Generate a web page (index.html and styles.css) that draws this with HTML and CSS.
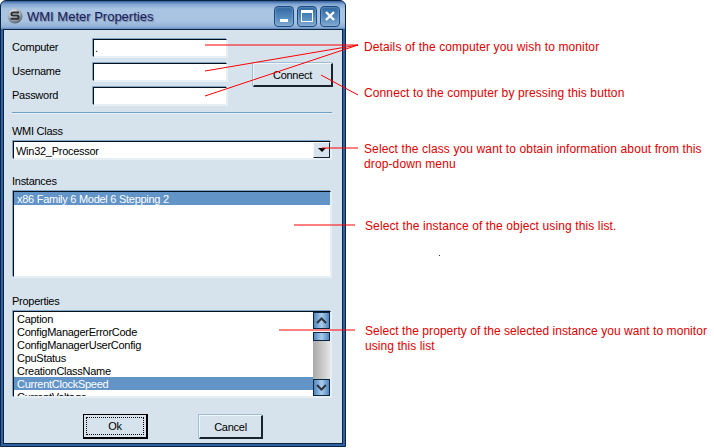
FILE: index.html
```html
<!DOCTYPE html>
<html lang="en">
<head>
  <meta charset="UTF-8" />
  <title>WMI Meter Properties</title>
  <link rel="stylesheet" href="styles.css">
</head>
<body>
  <div class="window">
    <div class="titlebar">
      <svg class="app-icon" width="16" height="16" viewBox="0 0 16 16">
        <defs>
          <radialGradient id="ball" cx="40%" cy="30%" r="75%">
            <stop offset="0" stop-color="#f2f4f6"/>
            <stop offset="0.6" stop-color="#a2a8b0"/>
            <stop offset="1" stop-color="#4b5460"/>
          </radialGradient>
        </defs>
        <circle cx="8" cy="8" r="7.5" fill="url(#ball)"/>
        <path d="M12 4.6H6.2C3.8 4.6 3.8 7.6 6.2 7.6H9.8C12.2 7.6 12.2 10.8 9.8 10.8H3.5" fill="none" stroke="#2a3038" stroke-width="2"/>
      </svg>
      <span class="title">WMI Meter Properties</span>
      <div class="title-buttons">
        <div class="title-btn"><span class="glyph-min"></span></div>
        <div class="title-btn"><span class="glyph-max"></span></div>
        <div class="title-btn">
          <svg width="12" height="12" viewBox="0 0 12 12"><path d="M2 2L10 10M10 2L2 10" stroke="#fff" stroke-width="2.4"/></svg>
        </div>
      </div>
    </div>

    <div class="client">
      <div class="login-form">
        <label class="lbl">Computer</label>
        <div class="field">.</div>
        <label class="lbl row2">Username</label>
        <div class="field row2"></div>
        <label class="lbl row3">Password</label>
        <div class="field row3"></div>
        <div class="btn connect-btn">Connect</div>
      </div>
      <div class="separator"></div>

      <div class="group-label class-label">WMI Class</div>
      <div class="field combo">
        <span class="combo-text">Win32_Processor</span>
        <div class="combo-btn"><span class="arrow-down"></span></div>
      </div>

      <div class="group-label instances-label">Instances</div>
      <div class="field listbox instances">
        <div class="list-item selected">x86 Family 6 Model 6 Stepping 2</div>
      </div>

      <div class="group-label properties-label">Properties</div>
      <div class="field listbox properties">
        <div class="list-rows">
          <div class="list-item">Caption</div>
          <div class="list-item">ConfigManagerErrorCode</div>
          <div class="list-item">ConfigManagerUserConfig</div>
          <div class="list-item">CpuStatus</div>
          <div class="list-item">CreationClassName</div>
          <div class="list-item selected">CurrentClockSpeed</div>
          <div class="list-item">CurrentVoltage</div>
        </div>
        <div class="scrollbar">
          <div class="scroll-btn">
            <svg width="11" height="7" viewBox="0 0 11 7"><path d="M1 6L5.5 1.5L10 6" fill="none" stroke="#2c3440" stroke-width="2"/></svg>
          </div>
          <div class="scroll-thumb"></div>
          <div class="scroll-track"></div>
          <div class="scroll-btn">
            <svg width="11" height="7" viewBox="0 0 11 7"><path d="M1 1L5.5 5.5L10 1" fill="none" stroke="#2c3440" stroke-width="2"/></svg>
          </div>
        </div>
      </div>

      <div class="dialog-buttons">
        <div class="btn default-btn"><span class="focus-box">Ok</span></div>
        <div class="btn cancel-btn">Cancel</div>
      </div>
    </div>
  </div>

  <!-- callouts drawn over the dialog -->
  <svg class="callout-lines" width="714" height="448" viewBox="0 0 714 448">
    <path d="M205 45H358M205 71L358 45M205 96L358 45M321 75L358 95M322 148H358M294 225H355M279 330H355" fill="none" stroke="#f00" stroke-width="1"/>
    <rect x="439" y="255" width="1" height="1" fill="#333"/>
  </svg>
  <div class="note note-details">Details of the computer you wish to monitor</div>
  <div class="note note-connect">Connect to the computer by pressing this button</div>
  <div class="note note-class">Select the class you want to obtain information about from this<br>drop-down menu</div>
  <div class="note note-instance">Select the instance of the object using this list.</div>
  <div class="note note-property">Select the property of the selected instance you want to monitor<br>using this list</div>
</body>
</html>
```

FILE: styles.css
```css
* {
  margin: 0;
  padding: 0;
  box-sizing: border-box;
}

body {
  position: relative;
  width: 714px;
  height: 448px;
  overflow: hidden;
  background-color: #fff;
  font-family: "Liberation Sans", Arial, sans-serif;
  font-size: 11px;
  letter-spacing: -0.27px;
  color: #000;
}

.window {
  width: 346px;
  height: 447px;
  display: flex;
  flex-direction: column;
  background-color: #2f62a5;
  border: 1px solid #0d2440;
  border-top-left-radius: 6px;
  border-top-right-radius: 6px;
  padding: 0 2px 2px 2px;
}

.titlebar {
  height: 28px;
  flex: none;
  margin: 0 -2px;
  padding: 2px 5px 0 6px;
  display: flex;
  align-items: center;
  gap: 4px;
  background: linear-gradient(180deg, #2f5f9e 0, #7fa4d0 3px, #a9c4e2 8px, #a9c4e2 20px, #8fb0d6 26px, #5f8abd 100%);
  border-top-left-radius: 5px;
  border-top-right-radius: 5px;
}

.app-icon {
  flex: none;
}

.title {
  flex: 1;
  font-size: 13px;
  letter-spacing: 0;
  color: #15205c;
  text-shadow: 1px 1px 1px #6f7f9f;
}

.title-buttons {
  display: flex;
  gap: 3px;
}

.title-btn {
  width: 20px;
  height: 21px;
  display: flex;
  align-items: center;
  justify-content: center;
  border: 1px solid #1f4a80;
  border-radius: 4px;
  background: linear-gradient(180deg, #2f669f 0, #4f86bb 50%, #7fa8d0 100%);
  box-shadow: inset 0 0 2px #a9c8e6;
}

.glyph-min {
  width: 8px;
  height: 3px;
  margin-top: 9px;
  background-color: #fff;
}

.glyph-max {
  width: 12px;
  height: 12px;
  border: 1px solid #fff;
  border-top-width: 3px;
}

.client {
  flex: 1;
  display: flex;
  flex-direction: column;
  padding: 9px 11px 0 9px;
  background-color: #d6e3ed;
  border: 1px solid #0d2440;
}

.login-form {
  display: grid;
  margin-left: -1px;
  grid-template-columns: 81px 134px 26px 80px;
  grid-template-rows: 18px 18px 18px;
  row-gap: 6px;
}

.lbl {
  grid-column: 1;
  grid-row: 1;
  align-self: center;
  margin-top: -2px;
}

.field {
  background-color: #fff;
  border: 1px solid;
  border-color: #0a0f18 #e6eff5 #e6eff5 #0a0f18;
  box-shadow: -1px -1px 0 #7fa6c8, 1px 1px 0 #e6eff5;
  padding-left: 1px;
  line-height: 16px;
}

.login-form .field {
  grid-column: 2;
  grid-row: 1;
}

.login-form .row2 {
  grid-row: 2;
}

.login-form .row3 {
  grid-row: 3;
}

.btn {
  display: flex;
  align-items: center;
  justify-content: center;
  background-color: #d6e3ed;
  border-style: solid;
  border-width: 1px 2px 2px 1px;
  border-color: #f2f7fa #1a2430 #1a2430 #f2f7fa;
  box-shadow: -1px -1px 0 #9fbdd6;
}

.connect-btn {
  grid-column: 4;
  grid-row: 2 / 4;
  height: 24px;
}

.separator {
  height: 2px;
  flex: none;
  margin: 7px -1px 0 -1px;
  background: linear-gradient(180deg, #6f9fc4 50%, #e8f1f6 50%);
}

.group-label {
  flex: none;
  line-height: 13px;
  margin-left: -1px;
}

.class-label {
  margin-top: 11px;
}

.combo {
  height: 18px;
  flex: none;
  margin-top: 3px;
  display: flex;
  align-items: center;
  justify-content: space-between;
  padding: 0 0 0 2px;
}

.combo-text {
  padding-top: 1px;
}

.combo-btn {
  width: 17px;
  height: 16px;
  display: flex;
  align-items: center;
  justify-content: center;
  background-color: #d6e3ed;
  border: 1px solid;
  border-color: #f2f7fa #1a2430 #1a2430 #f2f7fa;
}

.arrow-down {
  width: 0;
  height: 0;
  border-style: solid;
  border-width: 4px 4px 0 4px;
  border-color: #000 transparent transparent transparent;
}

.instances-label {
  margin-top: 16px;
}

.listbox {
  padding: 0;
  line-height: 13px;
}

.instances {
  height: 86px;
  flex: none;
  margin-top: 3px;
}

.list-item {
  height: 13px;
  padding: 1px 0 0 3px;
  white-space: nowrap;
}

.list-item.selected {
  background-color: #6394c8;
  color: #fff;
}

.properties-label {
  margin-top: 18px;
}

.properties {
  height: 86px;
  flex: none;
  margin-top: 3px;
  display: flex;
  overflow: hidden;
}

.list-rows {
  flex: 1;
  height: 84px;
  overflow: hidden;
}

.scrollbar {
  width: 17px;
  height: 84px;
  display: flex;
  flex-direction: column;
}

.scroll-btn {
  height: 17px;
  flex: none;
  display: flex;
  align-items: center;
  justify-content: center;
  border: 1px solid #10253f;
  background: linear-gradient(90deg, #4f86c0, #a9cbe8 50%, #4f86c0);
}

.scroll-thumb {
  height: 9px;
  flex: none;
  margin-top: 3px;
  border: 1px solid #10253f;
  background: linear-gradient(90deg, #4f86c0, #a9cbe8 50%, #4f86c0);
}

.scroll-track {
  flex: 1;
  background: linear-gradient(90deg, #a9a9a9, #e4e4e4);
}

.dialog-buttons {
  display: flex;
  align-items: flex-start;
  margin-top: 17px;
  padding-left: 70px;
  gap: 51px;
}

.default-btn {
  width: 65px;
  height: 25px;
  border-color: #000;
  box-shadow: none;
  padding: 2px;
}

.cancel-btn {
  width: 64px;
  height: 24px;
  margin-top: 1px;
}

.focus-box {
  flex: 1;
  align-self: stretch;
  display: flex;
  align-items: center;
  justify-content: center;
  border: 1px dotted #000;
}

.callout-lines {
  position: absolute;
  top: 0;
  left: 0;
  pointer-events: none;
}

.note {
  position: absolute;
  left: 364px;
  font-size: 12px;
  letter-spacing: 0.12px;
  line-height: 15px;
  color: #e00000;
  white-space: nowrap;
}

.note-details {
  top: 40px;
}

.note-connect {
  top: 86px;
}

.note-class {
  top: 142px;
}

.note-instance {
  top: 219px;
  left: 365px;
}

.note-property {
  top: 324px;
  left: 365px;
  letter-spacing: 0.06px;
}
```
